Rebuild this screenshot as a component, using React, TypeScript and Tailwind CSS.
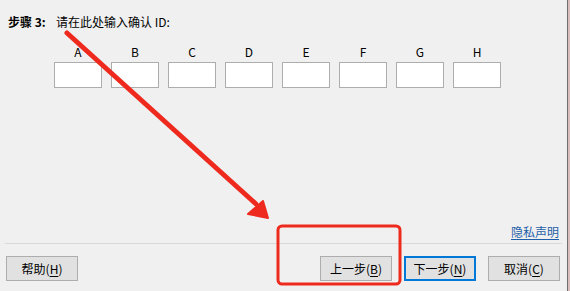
import React from "react"

const letters = ["A", "B", "C", "D", "E", "F", "G", "H"]

type Btn = { label: string, hot: string, primary?: boolean }

function DlgButton({ label, hot, primary }: Btn) {
  return (
    <button
      className={
        "w-[72px] h-[25px] bg-[#e1e1e1] text-[12px] text-black flex items-center justify-center " +
        (primary ? "border-2 border-[#0078d7]" : "border border-[#adadad]")
      }
    >
      {label}(<span className="underline underline-offset-2">{hot}</span>)
    </button>
  )
}

export default function App() {
  return (
    <div
      className="relative w-[570px] h-[291px] bg-[#f0f0f0] flex overflow-hidden text-black"
      style={{ fontFamily: '"Noto Sans CJK SC", "Noto Sans", sans-serif' }}
    >
      <div className="flex-1 flex flex-col">
        <div className="pl-[8px] pt-[13px] flex items-center text-[12px] leading-[18px]">
          <span className="font-bold w-[48px]">步骤 3:</span>
          <span>请在此处输入确认 ID:</span>
        </div>

        <div className="pl-[54px] pt-[13px] flex gap-[9px]">
          {letters.map((l) => (
            <div key={l} className="flex flex-col items-center w-[48px]">
              <span className="text-[12px] leading-[16px]">{l}</span>
              <div className="mt-[2px] w-[48px] h-[26px] bg-white border border-[#adadad]"></div>
            </div>
          ))}
        </div>

        <div className="flex-1"></div>

        <div className="flex justify-end pr-[8px]">
          <a className="text-[12px] leading-[16px] text-[#1f5fa8] underline underline-offset-2">隐私声明</a>
        </div>
        <div className="mt-[3px] mx-[5px] h-px bg-[#d9d9d9]"></div>

        <div className="pt-[12px] pb-[10px] px-[6px] flex items-center">
          <DlgButton label="帮助" hot="H" />
          <div className="flex-1"></div>
          <div className="flex gap-[12px] pr-[1px]">
            <DlgButton label="上一步" hot="B" />
            <DlgButton label="下一步" hot="N" primary />
            <DlgButton label="取消" hot="C" />
          </div>
        </div>
      </div>

      <div className="w-[3px] border-l border-[#6f6f6f] bg-[#d9bcbc]"></div>

      <svg className="absolute inset-0 pointer-events-none" width="570" height="291">
        <line x1="67" y1="33" x2="256" y2="204" stroke="#ee2a1e" strokeWidth="5" strokeLinecap="round" />
        <polygon points="268,218 263,201 248,214" fill="#ee2a1e" stroke="#ee2a1e" strokeWidth="2" strokeLinejoin="round" />
        <rect x="278" y="226" width="122" height="58" rx="4" fill="none" stroke="#ee2a1e" strokeWidth="3" />
      </svg>
    </div>
  )
}
